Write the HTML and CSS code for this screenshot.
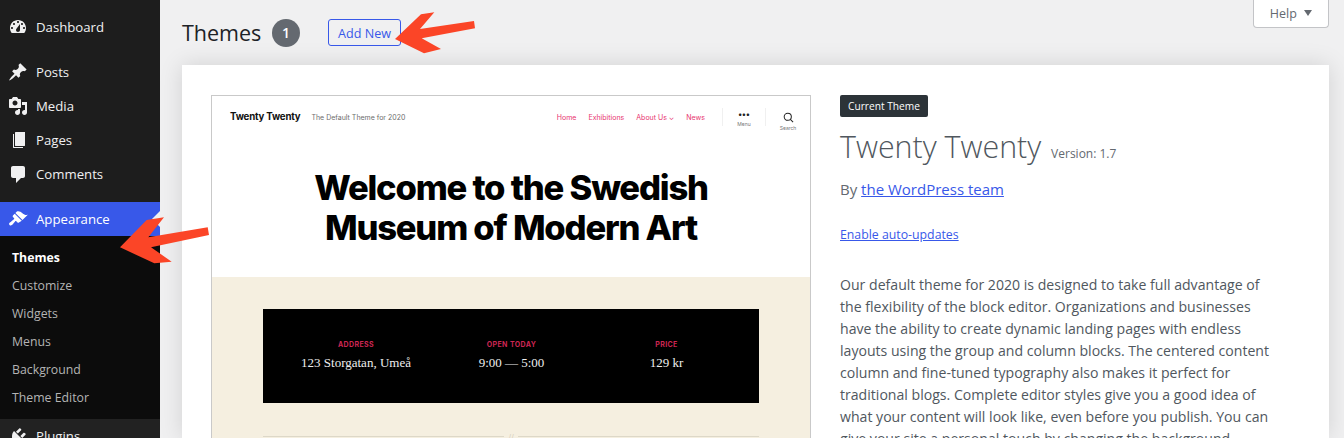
FILE: index.html
```html
<!DOCTYPE html>
<html lang="en">
<head>
  <meta charset="UTF-8" />
  <title>Themes</title>
  <link rel="stylesheet" href="styles.css">
</head>
<body>
  <aside class="sidebar">
    <ul class="menu menu-top">
      <li class="menu-item"><svg class="menu-icon" viewBox="0 0 20 20"><path fill-rule="evenodd" d="M3.76 16h12.48c1.1-1.37 1.76-3.11 1.76-5 0-4.42-3.58-8-8-8s-8 3.58-8 8c0 1.89.66 3.63 1.76 5zM10 4c.55 0 1 .45 1 1s-.45 1-1 1-1-.45-1-1 .45-1 1-1zM6 6c.55 0 1 .45 1 1s-.45 1-1 1-1-.45-1-1 .45-1 1-1zm8 0c.55 0 1 .45 1 1s-.45 1-1 1-1-.45-1-1 .45-1 1-1zm-5.37 5.55L12 7v6c0 1.1-.9 2-2 2s-2-.9-2-2c0-.57.24-1.08.63-1.45zM4 10c.55 0 1 .45 1 1s-.45 1-1 1-1-.45-1-1 .45-1 1-1zm12 0c.55 0 1 .45 1 1s-.45 1-1 1-1-.45-1-1 .45-1 1-1z"/></svg>Dashboard</li>
    </ul>
    <ul class="menu">
      <li class="menu-item"><svg class="menu-icon" viewBox="0 0 20 20"><path d="M10.44 3.02l1.82-1.82 6.36 6.35-1.83 1.82c-1.05-.68-2.48-.57-3.41.36l-.75.75c-.92.93-1.04 2.35-.35 3.41l-1.83 1.82-2.41-2.41-2.8 2.79c-.42.42-3.38 2.71-3.8 2.29s1.86-3.39 2.28-3.81l2.79-2.79L4.1 9.36l1.83-1.82c1.05.69 2.48.57 3.41-.36l.75-.75c.93-.92 1.05-2.35.35-3.41z"/></svg>Posts</li>
      <li class="menu-item"><svg class="menu-icon" viewBox="0 0 20 20"><path fill-rule="evenodd" d="M13 11V4c0-.55-.45-1-1-1h-1.67L9 1H5L3.67 3H2c-.55 0-1 .45-1 1v7c0 .55.45 1 1 1h10c.55 0 1-.45 1-1zM7 4.5c1.38 0 2.5 1.12 2.5 2.5S8.38 9.5 7 9.5 4.5 8.38 4.5 7 5.62 4.5 7 4.5zM14 6h5v10.5c0 1.38-1.12 2.5-2.5 2.5S14 17.88 14 16.5s1.12-2.5 2.5-2.5c.17 0 .34.02.5.05V9h-3V6zm-4 8.05V13h2v3.5c0 1.38-1.12 2.5-2.5 2.5S7 17.88 7 16.5 8.12 14 9.5 14c.17 0 .34.02.5.05z"/></svg>Media</li>
      <li class="menu-item"><svg class="menu-icon" viewBox="0 0 20 20"><path d="M7.500 2H17v13.500c0 .3-.2.5-.5.5h-9c-.3 0-.5-.2-.5-.5v-13c0-.3.2-.5.5-.5z"/><path d="M5 4h1v13h9v1H5.500c-.3 0-.5-.2-.5-.5z"/></svg>Pages</li>
      <li class="menu-item"><svg class="menu-icon" viewBox="0 0 20 20"><path d="M5 2h10c1.1 0 2 .9 2 2v8c0 1.1-.9 2-2 2h-2l-5 5v-5H5c-1.1 0-2-.9-2-2V4c0-1.1.9-2 2-2z"/></svg>Comments</li>
    </ul>
    <ul class="menu">
      <li class="menu-item is-current"><svg class="menu-icon" viewBox="0 0 20 20"><path d="M14.48 11.06L7.41 3.99l1.5-1.5c.5-.56 2.3-.47 3.51.32 1.21.8 1.43 1.28 2.91 2.1 1.18.64 2.45 1.26 4.45.85zm-.71.71L6.7 4.7 4.93 6.47c-.39.39-.39 1.02 0 1.41l1.06 1.06c.39.39.39 1.03 0 1.42-.6.6-1.43 1.11-2.21 1.69-.35.26-.7.53-1.01.84C1.43 13.23.4 14.75 1.53 15.88c1.13 1.13 2.64.1 3.01-.26.31-.31.58-.66.84-1.01.58-.78 1.09-1.61 1.69-2.21.39-.39 1.02-.39 1.41 0l1.06 1.06c.39.39 1.02.39 1.41 0z"/></svg>Appearance</li>
      <li>
        <ul class="submenu">
          <li class="is-active">Themes</li>
          <li>Customize</li>
          <li>Widgets</li>
          <li>Menus</li>
          <li>Background</li>
          <li>Theme Editor</li>
        </ul>
      </li>
      <li class="menu-item is-plugins"><svg class="menu-icon" viewBox="0 0 20 20"><path d="M13.11 4.36L9.87 7.6 8 5.73l3.24-3.24c.35-.34 1.05-.2 1.56.32.52.51.66 1.21.31 1.55zm-8 1.77l.91-1.12 9.01 9.01-1.19.84c-.71.71-2.63 1.16-3.82 1.16H6.14L4.9 17.26c-.59.59-1.54.59-2.12 0-.59-.58-.59-1.53 0-2.12l1.24-1.24v-3.88c0-1.13.4-3.19 1.09-3.89zm7.26 3.97l3.24-3.24c.34-.35 1.04-.21 1.55.31.52.51.66 1.21.32 1.55l-3.24 3.25z"/></svg>Plugins</li>
    </ul>
  </aside>

  <main class="main">
    <header class="page-head">
      <h1>Themes</h1>
      <span class="count">1</span>
      <a class="add-new">Add New</a>
      <button class="help">Help <span class="help-caret"></span></button>
    </header>

    <section class="card">
      <div class="shot">
        <div class="shot-hero">
          <div class="shot-nav">
            <strong class="shot-brand">Twenty Twenty</strong>
            <span class="shot-tag">The Default Theme for 2020</span>
            <nav class="shot-links">
              <span>Home</span>
              <span>Exhibitions</span>
              <span>About Us ⌄</span>
              <span>News</span>
            </nav>
            <div class="shot-tool shot-tool-menu"><b>•••</b><small>Menu</small></div>
            <div class="shot-tool">
              <svg viewBox="0 0 12 12" width="11" height="11"><circle cx="5.2" cy="5.2" r="3.9"/><path d="M8 8l3 3"/></svg>
              <small>Search</small>
            </div>
          </div>
          <h2>Welcome to the Swedish<br>Museum of Modern Art</h2>
        </div>
        <div class="shot-body">
          <div class="shot-info">
            <div><h3>Address</h3><p>123 Storgatan, Umeå</p></div>
            <div><h3>Open Today</h3><p>9:00 — 5:00</p></div>
            <div><h3>Price</h3><p>129 kr</p></div>
          </div>
          <div class="shot-rule"><i></i><span>//</span><i></i></div>
        </div>
      </div>

      <div class="details">
        <span class="current">Current Theme</span>
        <h2 class="theme-name">Twenty Twenty <span class="version">Version: 1.7</span></h2>
        <p class="author">By <a>the WordPress team</a></p>
        <p class="auto"><a>Enable auto-updates</a></p>
        <p class="desc">Our default theme for 2020 is designed to take full advantage of<br>
        the flexibility of the block editor. Organizations and businesses<br>
        have the ability to create dynamic landing pages with endless<br>
        layouts using the group and column blocks. The centered content<br>
        column and fine-tuned typography also makes it perfect for<br>
        traditional blogs. Complete editor styles give you a good idea of<br>
        what your content will look like, even before you publish. You can<br>
        give your site a personal touch by changing the background</p>
      </div>
    </section>
  </main>

  <!-- red annotation arrows -->
  <svg class="arrow" width="1344" height="438" viewBox="0 0 1344 438">
    <polygon points="395,39 421,14.300 434.300,12.300 420,29 474,21 475,28.300 421.700,38.300 441,49 424,53.300"/>
    <polygon points="120,247.300 146.700,220 164,217.300 148.300,237.300 207.700,227.300 209,235 151,247.300 171.700,261.700 154.300,263.300"/>
  </svg>
</body>
</html>
```

FILE: styles.css
```css
* { box-sizing: border-box; }

html, body {
  height: 438px;
  overflow: hidden;
}

body {
  margin: 0;
  display: flex;
  font-family: 'Open Sans', sans-serif;
  background: #f0f0f1;
  color: #3c434a;
}

ul {
  list-style: none;
  margin: 0;
  padding: 0;
}

/* Sidebar */
.sidebar {
  width: 160px;
  height: 438px;
  flex: none;
  overflow: hidden;
  background: #1d1d1d;
  padding-top: 10px;
  color: #f0f0f1;
  font-size: 13.2px;
}

.menu { margin-bottom: 11px; }

.menu-item {
  display: flex;
  align-items: center;
  height: 34px;
  padding-left: 8px;
  position: relative;
}

.menu-icon {
  width: 20px;
  height: 20px;
  margin-right: 8px;
  fill: #f0f0f1;
}

.is-current {
  background: #3858e9;
  color: #fff;
}

.is-current .menu-icon { fill: #fff; }

.is-current::after {
  content: "";
  position: absolute;
  right: 0;
  top: 9px;
  border: 8px solid transparent;
  border-right-color: #f0f0f1;
  border-left-width: 0;
}

.submenu {
  background: #0c0c0c;
  padding: 7px 0 8px;
  font-size: 12.3px;
  color: #b4b4b4;
}

.submenu li {
  height: 28px;
  line-height: 29px;
  padding-left: 12px;
}

.submenu .is-active {
  color: #fff;
  font-weight: 700;
}

.is-plugins { background: #222; }

/* Main column */
.main {
  flex: 1;
  min-width: 0;
  height: 438px;
  overflow: hidden;
  padding: 0 15px 0 22px;
}

.page-head {
  display: flex;
  align-items: center;
  height: 65px;
}

.page-head h1 {
  margin: 0;
  width: 78px;
  font-size: 21.5px;
  font-weight: 400;
  color: #1d2327;
}

.count {
  width: 28px;
  height: 28px;
  margin-left: 12px;
  border-radius: 50%;
  background: #646970;
  color: #fff;
  font-size: 14px;
  font-weight: 600;
  line-height: 28px;
  text-align: center;
}

.add-new {
  margin-left: 28px;
  width: 73px;
  height: 27px;
  border: 1px solid #3858e9;
  border-radius: 3px;
  color: #3858e9;
  font-size: 12.6px;
  line-height: 27px;
  text-align: center;
}

.help {
  align-self: flex-start;
  margin-left: auto;
  width: 76px;
  height: 28px;
  border: 1px solid #c3c4c7;
  border-top: none;
  border-radius: 0 0 4px 4px;
  background: #fff;
  color: #646970;
  font: 12.5px 'Open Sans', sans-serif;
  padding: 0;
}

.help-caret {
  display: inline-block;
  margin-left: 4px;
  vertical-align: 2px;
  border: 4.5px solid transparent;
  border-top: 6px solid #646970;
  border-bottom: 0;
}

.card {
  display: flex;
  gap: 29px;
  height: 373px;
  padding: 30px 29px 0;
  background: #fff;
  box-shadow: 0 0 22px rgba(0, 0, 0, 0.13);
}

/* Theme screenshot */
.shot {
  width: 600px;
  height: 400px;
  flex: none;
  border: 1px solid #c9c9c9;
  font-family: Inter, sans-serif;
}

.shot-hero {
  height: 181px;
  background: #fff;
}

.shot-nav {
  display: flex;
  align-items: center;
  height: 42px;
  padding: 0 0 0 18px;
}

.shot-brand {
  font-size: 9.7px;
  letter-spacing: -0.2px;
  color: #111;
  margin-top: -1px;
}

.shot-tag {
  margin-left: 11px;
  font-size: 7px;
  color: #6d6d6d;
}

.shot-links {
  display: flex;
  gap: 12px;
  margin-left: auto;
  font-size: 7px;
  color: #e8356f;
}

.shot-tool {
  display: flex;
  flex-direction: column;
  align-items: center;
  width: 44px;
  padding-top: 10px;
  color: #222;
}

.shot-tool-menu {
  margin-left: 17px;
  border-right: 1px solid #f0f0f0;
  border-left: 1px solid #f0f0f0;
  height: 18px;
  padding-top: 0;
}

.shot-tool b {
  font-size: 8px;
  line-height: 12px;
}

.shot-tool small {
  font-size: 5px;
  color: #777;
  line-height: 8px;
}

.shot-tool svg {
  fill: none;
  stroke: #222;
  stroke-width: 1.1;
  margin-bottom: 1px;
}

.shot-hero h2 {
  margin: 29px 0 0;
  text-align: center;
  font-size: 34.6px;
  line-height: 40px;
  font-weight: 800;
  letter-spacing: -1.2px;
  color: #000;
}

.shot-body {
  height: 218px;
  background: #f5efe0;
  padding: 32px 51px 0;
}

.shot-info {
  display: grid;
  grid-template-columns: 186px 125px 185px;
  height: 94px;
  padding-top: 31px;
  background: #000;
  text-align: center;
  color: #eee;
}

.shot-info h3 {
  margin: 0;
  color: #cd2653;
  font-size: 7px;
  line-height: 10px;
  letter-spacing: 0.4px;
  text-transform: uppercase;
}

.shot-info p {
  margin: 3px 0 0;
  font: 13px/20px 'Liberation Serif', serif;
}

.shot-rule {
  display: flex;
  align-items: center;
  gap: 4px;
  height: 1px;
  margin-top: 33px;
  color: #d8d2c2;
  font-size: 8px;
}

.shot-rule i {
  flex: 1;
  height: 1px;
  background: #ddd8c8;
}

/* Theme details */
.details {
  flex: 1;
  min-width: 0;
  color: #50575e;
}

.current {
  display: block;
  width: 88px;
  height: 22px;
  border-radius: 2px;
  background: #2c3338;
  color: #fff;
  font-size: 10.2px;
  line-height: 22px;
  text-align: center;
}

.theme-name {
  margin: 12px 0 0;
  font-size: 30.4px;
  line-height: 36px;
  font-weight: 300;
}

.version {
  margin-left: 2px;
  font-size: 12px;
  font-weight: 400;
  color: #646970;
}

.author {
  margin: 6px 0 0;
  font-size: 15px;
  line-height: 22px;
  color: #646970;
}

.details a {
  color: #3858e9;
  text-decoration: underline;
}

.auto {
  margin: 24px 0 0;
  font-size: 12.3px;
  line-height: 22px;
}

.desc {
  margin: 28px 0 0;
  font-size: 14.1px;
  line-height: 22px;
  white-space: nowrap;
}

/* Annotation layer */
.arrow {
  position: absolute;
  left: 0;
  top: 0;
  fill: #fb4527;
  pointer-events: none;
}
```
